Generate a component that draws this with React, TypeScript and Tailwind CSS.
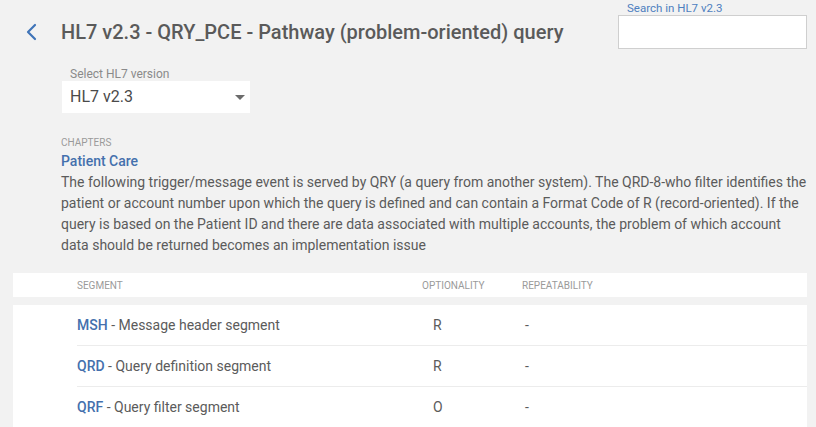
import React from "react";

const rows = [
  { code: "MSH", name: "Message header segment", opt: "R", rep: "-" },
  { code: "QRD", name: "Query definition segment", opt: "R", rep: "-" },
  { code: "QRF", name: "Query filter segment", opt: "O", rep: "-" },
];

export default function App() {
  return (
    <div className="w-[816px] h-[427px] overflow-hidden bg-[#f2f2f2] text-[#5b5b5b]" style={{ fontFamily: "Roboto, 'Liberation Sans', sans-serif" }}>
      <div className="flex items-start">
        <div className="flex items-center pt-[20px] pl-[24px]">
          <svg width="14" height="18" viewBox="0 0 14 18" className="mr-[23px]">
            <path d="M11 2 L4 9 L11 16" fill="none" stroke="#3f74b8" strokeWidth="2.2" strokeLinecap="round" strokeLinejoin="round" />
          </svg>
          <h1 className="text-[20px] leading-[24px] font-medium text-[#5a5a5a]">HL7 v2.3 - QRY_PCE - Pathway (problem-oriented) query</h1>
        </div>
        <div className="ml-auto mr-[9px] pt-[1px] flex flex-col">
          <label className="text-[11.5px] leading-[14px] text-[#4e7fc0] pl-[9px]">Search in HL7 v2.3</label>
          <div className="w-[189px] h-[34px] bg-white border border-[#cfcfcf]" />
        </div>
      </div>

      <div className="pl-[62px] pt-[18px]">
        <div className="text-[12px] leading-[14px] text-[#8a8a8a] pl-[8px]">Select HL7 version</div>
        <div className="w-[188px] h-[32px] bg-white flex items-center pl-[8px] pr-[5px]">
          <span className="text-[16px] text-[#4a4a4a]">HL7 v2.3</span>
          <svg width="10" height="5" viewBox="0 0 10 5" className="ml-auto">
            <path d="M0 0 L10 0 L5 5 Z" fill="#6b6b6b" />
          </svg>
        </div>
      </div>

      <div className="pl-[61px] pr-[4px] pt-[23px]">
        <div className="text-[10px] leading-[13px] text-[#9a9a9a]">CHAPTERS</div>
        <div className="text-[14px] leading-[20px] font-medium text-[#4470ad] mt-[2px]">Patient Care</div>
        <p className="text-[14px] leading-[21px] text-[#5b5b5b] mt-[1px]">
          The following trigger/message event is served by QRY (a query from another system). The QRD-8-who filter identifies the patient or account number upon which the query is defined and can contain a Format Code of R (record-oriented). If the query is based on the Patient ID and there are data associated with multiple accounts, the problem of which account data should be returned becomes an implementation issue
        </p>
      </div>

      <div className="ml-[13px] mr-[9px] mt-[17px] h-[24px] bg-white flex items-center text-[10px] text-[#9a9a9a]">
        <div className="pl-[64px] w-[409px]">SEGMENT</div>
        <div className="w-[100px]">OPTIONALITY</div>
        <div>REPEATABILITY</div>
      </div>

      <div className="ml-[13px] mr-[9px] mt-[8px] bg-white">
        {rows.map((r, i) => (
          <div key={r.code} className="pl-[64px]">
            <div className={`flex items-center h-[41px] ${i < rows.length - 1 ? "border-b border-[#ececec]" : ""}`}>
              <div className="w-[345px] text-[14px]">
                <span className="font-medium text-[#4470ad]">{r.code}</span>
                <span className="text-[#5b5b5b]"> - {r.name}</span>
              </div>
              <div className="w-[100px] pl-[11px] text-[14px] text-[#5b5b5b]">{r.opt}</div>
              <div className="pl-[3px] text-[14px] text-[#5b5b5b]">{r.rep}</div>
            </div>
          </div>
        ))}
      </div>
    </div>
  );
}
